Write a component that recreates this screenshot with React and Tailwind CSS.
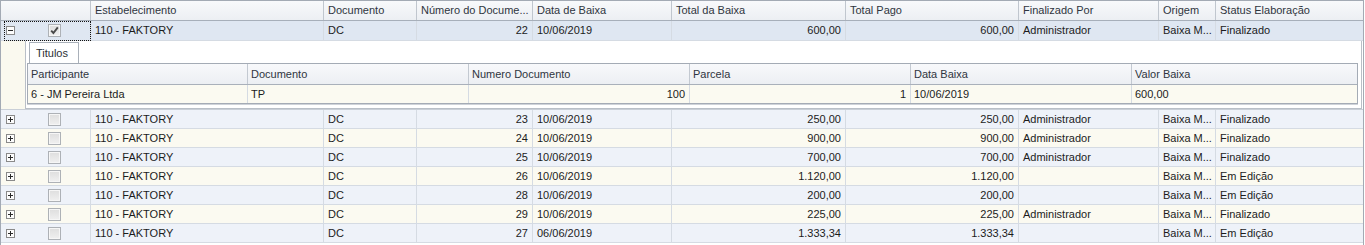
import React from "react";

const cols = [
  { key: "est", label: "Estabelecimento", w: "w-[233px]" },
  { key: "doc", label: "Documento", w: "w-[93px]" },
  { key: "num", label: "Número do Docume...", w: "w-[116px]", right: true },
  { key: "data", label: "Data de Baixa", w: "w-[139px]" },
  { key: "total", label: "Total da Baixa", w: "w-[174px]", right: true },
  { key: "pago", label: "Total Pago", w: "w-[173px]", right: true },
  { key: "fin", label: "Finalizado Por", w: "w-[140px]" },
  { key: "orig", label: "Origem", w: "w-[57px]" },
  { key: "status", label: "Status Elaboração", w: "w-[147px]", last: true },
];

const detailCols = [
  { label: "Participante", w: "w-[220px]" },
  { label: "Documento", w: "w-[221px]" },
  { label: "Numero Documento", w: "w-[221px]", right: true },
  { label: "Parcela", w: "w-[221px]", right: true },
  { label: "Data Baixa", w: "w-[221px]" },
  { label: "Valor Baixa", w: "w-[225px]", last: true },
];

const detailRow = ["6 - JM Pereira Ltda", "TP", "100", "1", "10/06/2019", "600,00"];

const row = (num, data, total, fin, status) => ({
  est: "110 - FAKTORY",
  doc: "DC",
  num,
  data,
  total,
  pago: total,
  fin,
  orig: "Baixa M...",
  status,
});

const first = row("22", "10/06/2019", "600,00", "Administrador", "Finalizado");

const rows = [
  row("23", "10/06/2019", "250,00", "Administrador", "Finalizado"),
  row("24", "10/06/2019", "900,00", "Administrador", "Finalizado"),
  row("25", "10/06/2019", "700,00", "Administrador", "Finalizado"),
  row("26", "10/06/2019", "1.120,00", "", "Em Edição"),
  row("28", "10/06/2019", "200,00", "", "Em Edição"),
  row("29", "10/06/2019", "225,00", "Administrador", "Finalizado"),
  row("27", "06/06/2019", "1.333,34", "", "Em Edição"),
];

function ExpandBox({ open }) {
  return (
    <svg width="9" height="9" viewBox="0 0 9 9" className="shrink-0">
      <rect x="0.5" y="0.5" width="8" height="8" fill="#fcfcfc" stroke="#8a8a8a" />
      <path d="M2 4.5h5" stroke="#2a2a2a" />
      {!open && <path d="M4.5 2v5" stroke="#2a2a2a" />}
    </svg>
  );
}

function CheckBox({ checked }) {
  return (
    <span className="w-[13px] h-[13px] shrink-0 border border-[#adb1b6] bg-linear-to-b from-[#dedede] to-[#f0f0f0] shadow-[inset_0_0_0_1px_#f6f6f6] flex items-center justify-center">
      {checked && (
        <svg width="11" height="11" viewBox="0 0 11 11">
          <path d="M2.2 5.6 L4.4 8 L8.8 2.4" fill="none" stroke="#4a4a4a" strokeWidth="1.9" />
        </svg>
      )}
    </span>
  );
}

function DataRow({ item, bg, open, checked, focused, h = "h-[19px]" }) {
  return (
    <div className={`flex ${h} border-b border-[#d5dbe3] ${bg}`}>
      <div className="relative w-[90px] shrink-0 flex items-center border-r border-[#d5dbe3]">
        <span className="ml-[5px]">
          <ExpandBox open={open} />
        </span>
        <span className="ml-[33px]">
          <CheckBox checked={checked} />
        </span>
        {focused && (
          <span className="absolute left-[3px] top-0 bottom-[-1px] right-[-1px] border border-dotted border-[#111]" />
        )}
      </div>
      {cols.map((c) => (
        <div
          key={c.key}
          className={`${c.w} shrink-0 flex items-center overflow-hidden whitespace-nowrap ${
            c.last ? "" : "border-r border-[#d5dbe3]"
          } ${c.right ? "justify-end pr-[4px]" : "pl-[4px]"}`}
        >
          {item[c.key]}
        </div>
      ))}
    </div>
  );
}

function Detail() {
  return (
    <div className="flex h-[69px] border-b border-[#c9cfd7]">
      <div className="w-[24px] shrink-0 bg-[#faf9ef]" />
      <div className="w-[1337px] shrink-0 bg-white border-x border-b border-[#b9bfc7] flex flex-col">
        {/* Tab strip */}
        <div className="h-[22px] flex items-end pl-[3px]">
          <div className="h-[21px] w-[50px] border-x border-t border-[#a9b0b9] bg-white flex items-center pl-[6px] text-[#2b2f36]">
            Titulos
          </div>
        </div>
        {/* Inner grid */}
        <div className="ml-[1px] w-[1331px] border border-[#a4abb5] shadow-[0_1px_0_#cfd3d9]">
          <div className="flex h-[21px] border-b border-[#a9b0ba] bg-linear-to-b from-[#f8f9fb] to-[#eceff3] text-[#2f3540]">
            {detailCols.map((c) => (
              <div
                key={c.label}
                className={`${c.w} shrink-0 flex items-center pl-[3px] whitespace-nowrap ${
                  c.last ? "" : "border-r border-[#c3c9d1]"
                }`}
              >
                {c.label}
              </div>
            ))}
          </div>
          <div className="flex h-[18px] bg-[#fbfaf1]">
            {detailCols.map((c, i) => (
              <div
                key={c.label}
                className={`${c.w} shrink-0 flex items-center whitespace-nowrap ${
                  c.last ? "" : "border-r border-[#d5dbe3]"
                } ${c.right ? "justify-end pr-[4px]" : "pl-[3px]"}`}
              >
                {detailRow[i]}
              </div>
            ))}
          </div>
        </div>
      </div>
      <div className="w-[1px] shrink-0 bg-white" />
    </div>
  );
}

export default function App() {
  return (
    <div
      className="w-[1365px] h-[245px] overflow-hidden bg-white text-[11px] leading-none text-[#1c1c1c]"
      style={{ fontFamily: "'Liberation Sans', Arial, sans-serif" }}
    >
      <div className="w-[1364px] h-[260px] border border-[#a3aab4] bg-white">
        {/* Header */}
        <div className="flex h-[20px] border-b border-[#a7afba] bg-linear-to-b from-[#f8f9fb] to-[#eceff3] text-[#2f3540]">
          <div className="w-[90px] shrink-0 border-r border-[#c0c6ce]" />
          {cols.map((c) => (
            <div
              key={c.key}
              className={`${c.w} shrink-0 flex items-center pl-[4px] whitespace-nowrap overflow-hidden ${
                c.last ? "" : "border-r border-[#c0c6ce]"
              }`}
            >
              {c.label}
            </div>
          ))}
        </div>

        <DataRow item={first} bg="bg-[#dfe7f2]" open checked focused h="h-[20px]" />
        <Detail />

        {rows.map((r, i) => (
          <DataRow key={r.num} item={r} bg={i % 2 === 0 ? "bg-[#eef2f9]" : "bg-[#fbfaf1]"} />
        ))}
      </div>
    </div>
  );
}
